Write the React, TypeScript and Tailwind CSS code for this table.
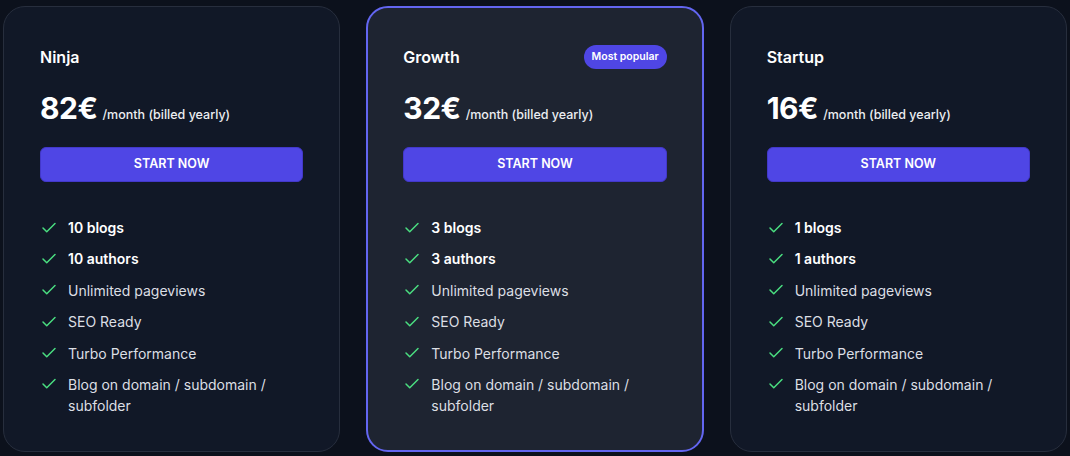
import { Check } from "lucide-react";

type Plan = {
  name: string;
  price: string;
  blogs: number;
  popular?: boolean;
};

const plans: Plan[] = [
  { name: "Ninja", price: "82€", blogs: 10 },
  { name: "Growth", price: "32€", blogs: 3, popular: true },
  { name: "Startup", price: "16€", blogs: 1 },
];

function Feature({ children, bold }: { children: React.ReactNode; bold?: boolean }) {
  return (
    <li className="flex items-start gap-[10px]">
      <Check size={18} strokeWidth={2} className="text-[#4ade80] mt-[1.5px] shrink-0" />
      <span className={bold ? "font-semibold text-white" : "text-[#dcdfe4]"}>{children}</span>
    </li>
  );
}

function PlanCard({ plan }: { plan: Plan }) {
  return (
    <div
      className={
        plan.popular
          ? "rounded-[22px] border-2 border-[#6366f1] bg-[#1e2431] px-[35px] pt-[37px] pb-[34px]"
          : "rounded-[22px] border border-[#272e3d] bg-[#111827] px-[36px] pt-[38px] pb-[35px]"
      }
    >
      <div className="flex items-center justify-between h-6">
        <h3 className="text-base font-semibold text-white">{plan.name}</h3>
        {plan.popular && (
          <span className="h-6 flex items-center rounded-full bg-[#4f46e5] px-[8px] text-[10.5px] font-semibold text-white">
            Most popular
          </span>
        )}
      </div>

      <div className="mt-[21px] flex items-baseline gap-[5px]">
        <span className="text-[30px] leading-9 font-bold text-white tracking-[-0.5px]">{plan.price}</span>
        <span className="text-[12.5px] font-medium text-[#eceef1]">/month (billed yearly)</span>
      </div>

      <button className="mt-[21px] w-full h-[35px] rounded-md bg-[#4f46e5] border border-[#4338ca] text-[12.5px] font-semibold text-white">
        START NOW
      </button>

      <ul className="mt-[35px] flex flex-col gap-[10.4px] text-[14px] leading-[21px]">
        <Feature bold>{plan.blogs} blogs</Feature>
        <Feature bold>{plan.blogs} authors</Feature>
        <Feature>Unlimited pageviews</Feature>
        <Feature>SEO Ready</Feature>
        <Feature>Turbo Performance</Feature>
        <Feature>Blog on domain / subdomain / subfolder</Feature>
      </ul>
    </div>
  );
}

export default function App() {
  return (
    <div
      className="min-h-screen w-[1070px] bg-[#0c111c] pt-[6px] px-[3px]"
      style={{ fontFamily: "Inter, 'Noto Sans', sans-serif" }}
    >
      <div className="grid grid-cols-3 gap-[26px]">
        {plans.map((p) => (
          <PlanCard key={p.name} plan={p} />
        ))}
      </div>
    </div>
  );
}
